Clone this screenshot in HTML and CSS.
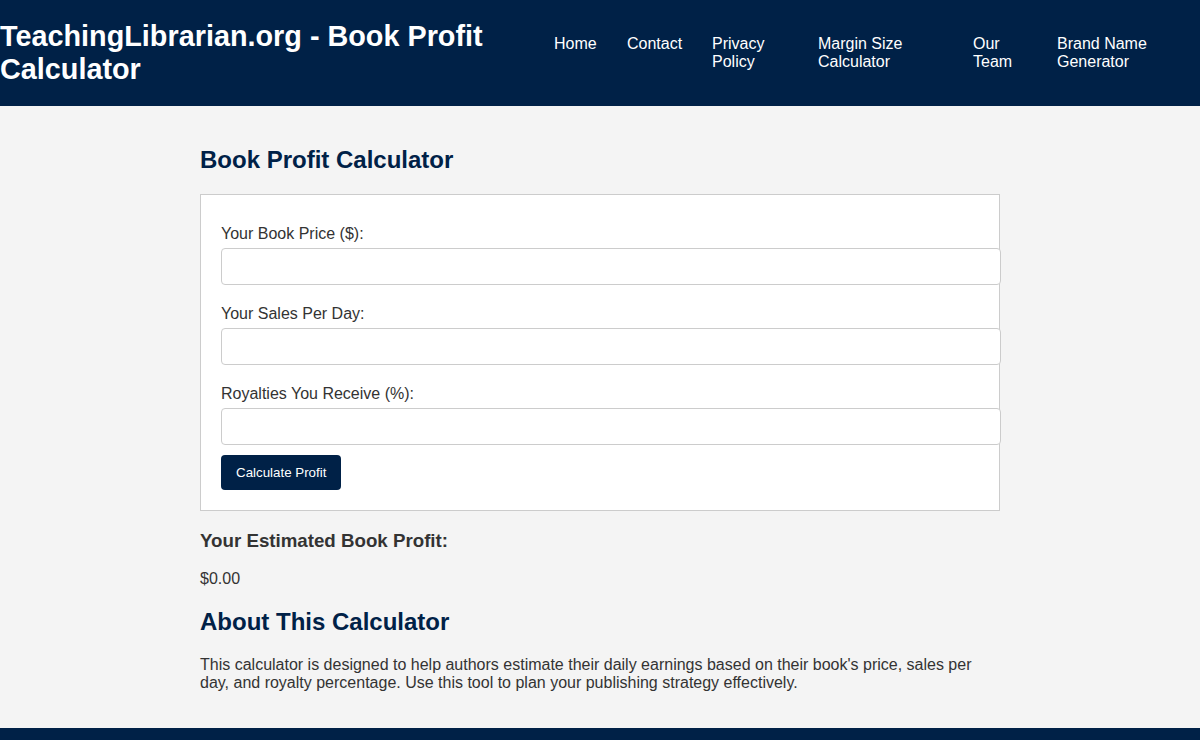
FILE: index.html
```html
<!DOCTYPE html>
<html lang="en">
<head>
<meta charset="utf-8">
<title>TeachingLibrarian.org - Book Profit Calculator</title>
<link rel="stylesheet" href="styles.css">
</head>
<body>
<header class="site-header">
  <h1 class="site-title">TeachingLibrarian.org - Book Profit Calculator</h1>
  <nav class="site-nav">
    <ul class="nav-list">
      <li><a href="#">Home</a></li>
      <li><a href="#">Contact</a></li>
      <li><a href="#">Privacy Policy</a></li>
      <li><a href="#">Margin Size Calculator</a></li>
      <li><a href="#">Our Team</a></li>
      <li><a href="#">Brand Name Generator</a></li>
    </ul>
  </nav>
</header>
<main class="container">
  <h2 class="section-title">Book Profit Calculator</h2>
  <form class="calc-card">
    <label class="field-label" for="price">Your Book Price ($):</label>
    <input class="field-input" id="price" type="text">
    <label class="field-label" for="sales">Your Sales Per Day:</label>
    <input class="field-input" id="sales" type="text">
    <label class="field-label" for="royalty">Royalties You Receive (%):</label>
    <input class="field-input" id="royalty" type="text">
    <button class="calc-button" type="button">Calculate Profit</button>
  </form>
  <h3 class="result-title">Your Estimated Book Profit:</h3>
  <p class="text">$0.00</p>
  <h2 class="section-title">About This Calculator</h2>
  <p class="text">This calculator is designed to help authors estimate their daily earnings based on their book's price, sales per day, and royalty percentage. Use this tool to plan your publishing strategy effectively.</p>
</main>
<footer class="site-footer"></footer>
</body>
</html>
```

FILE: styles.css
```css
* {
  margin: 0;
}

body {
  margin: 0;
  background: #f4f4f4;
  color: #333;
  font-family: "Liberation Sans", Arial, sans-serif;
  font-size: 16px;
}

.site-header {
  background: #002147;
  color: #fff;
  display: flex;
  align-items: center;
  padding: 20px 0;
}

.site-title {
  width: 524px;
  flex: 0 0 524px;
  font-size: 28.8px;
  line-height: 33px;
  font-weight: bold;
}

.site-nav {
  flex: 1 1 auto;
  padding-left: 30px;
}

.nav-list {
  list-style: none;
  padding: 0;
  display: grid;
  grid-template-columns: 43px 55px 76px 125px 54px 1fr;
  column-gap: 30px;
  line-height: 18px;
}

.nav-list a {
  color: #fff;
  text-decoration: none;
}

.container {
  width: 800px;
  margin: 0 auto;
  padding: 20px 0;
}

.section-title {
  font-size: 24px;
  color: #002147;
  margin: 20px 0;
}

.calc-card {
  background: #fff;
  border: 1px solid #ccc;
  padding: 20px;
  display: flex;
  flex-direction: column;
  align-items: stretch;
}

.field-label {
  display: block;
  margin: 9px 0 5px;
  line-height: 19px;
}

.field-input {
  display: block;
  width: 100%;
  padding: 8px 10px;
  font-size: 16px;
  font-family: "Liberation Sans", Arial, sans-serif;
  line-height: 19px;
  height: 19px;
  box-sizing: content-box;
  border: 1px solid #ccc;
  border-radius: 4px;
  background: #fff;
  margin-bottom: 10px;
}

.calc-button {
  align-self: flex-start;
  background: #002147;
  color: #fff;
  border: none;
  border-radius: 4px;
  padding: 10px 15px;
  font-size: 13.33px;
  line-height: 15px;
  font-family: "Liberation Sans", Arial, sans-serif;
  cursor: pointer;
}

.result-title {
  font-size: 18.72px;
  line-height: 22px;
  margin: 18.72px 0;
}

.text {
  margin: 16px 0;
  line-height: 18px;
}

.site-footer {
  background: #002147;
  height: 60px;
}
```
